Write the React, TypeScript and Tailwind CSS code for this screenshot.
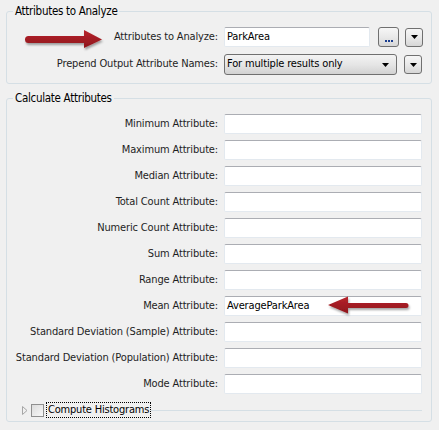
import React from "react";

// ventana de FME: Attributes to Analyze / Calculate Attributes

const font = { fontFamily: '"DejaVu Sans Condensed", "DejaVu Sans", sans-serif' };

const Caret = () => (
  <svg width="7" height="4" viewBox="0 0 7 4">
    <path d="M0 0 H7 L3.5 4 Z" fill="#000" />
  </svg>
);

const SmallBtn = () => (
  <button className="w-[18px] h-[19px] flex items-center justify-center border border-[#707070] rounded-[3px] bg-gradient-to-b from-[#f6f6f6] via-[#e9e9e9] to-[#d6d6d6]">
    <Caret />
  </button>
);

const TextBox = ({ value, w }: { value?: string; w: string }) => (
  <div
    className={`${w} h-[20px] bg-white border border-[#e3e9ef] border-t-[#abadb3] rounded-[2px] flex items-center pl-[2px] text-[11px] tracking-[-0.15px] text-black`}
  >
    {value}
  </div>
);

const Label = ({ text }: { text: string }) => (
  <span className="w-[211px] text-right text-[11px] tracking-[-0.15px] text-[#1e1e1e] whitespace-nowrap">
    {text}
  </span>
);

const calcRows = [
  { label: "Minimum Attribute:" },
  { label: "Maximum Attribute:" },
  { label: "Median Attribute:" },
  { label: "Total Count Attribute:" },
  { label: "Numeric Count Attribute:" },
  { label: "Sum Attribute:" },
  { label: "Range Attribute:" },
  { label: "Mean Attribute:", value: "AverageParkArea" },
  { label: "Standard Deviation (Sample) Attribute:" },
  { label: "Standard Deviation (Population) Attribute:" },
  { label: "Mode Attribute:" },
];

const App = () => {
  return (
    <div
      className="relative w-[439px] h-[430px] bg-[#f0f0f0] pl-[6px] pr-[7px] pt-[4px] overflow-hidden"
      style={font}
    >
      {/* grupo 1 */}
      <fieldset className="border border-[#d5dfe5] rounded-[3px] pt-[9px] pb-[8px]">
        <legend className="ml-[6px] px-[2px] text-[11.5px] tracking-[-0.3px] leading-[14px] text-black">
          Attributes to Analyze
        </legend>
        <div className="flex items-center gap-[6px]">
          <Label text="Attributes to Analyze:" />
          <TextBox value="ParkArea" w="w-[146px]" />
          <button className="ml-[2px] w-[21px] h-[20px] border border-[#707070] rounded-[3px] bg-gradient-to-b from-[#f6f6f6] via-[#e9e9e9] to-[#d6d6d6] flex items-end justify-center pb-[4px] gap-[1px]">
            <span className="w-[2px] h-[2px] bg-[#1a3d8f]" />
            <span className="w-[2px] h-[2px] bg-[#1a3d8f]" />
            <span className="w-[2px] h-[2px] bg-[#1a3d8f]" />
          </button>
          <SmallBtn />
        </div>
        <div className="flex items-center gap-[6px] mt-[7px]">
          <Label text="Prepend Output Attribute Names:" />
          <div className="w-[173px] h-[21px] border border-[#707070] rounded-[3px] bg-gradient-to-b from-[#f3f3f3] via-[#e6e6e6] to-[#d2d2d2] flex items-center justify-between pl-[2px] pr-[7px] text-[11px] tracking-[-0.15px] text-black">
            For multiple results only
            <Caret />
          </div>
          <div className="ml-[1px]">
            <SmallBtn />
          </div>
        </div>
      </fieldset>

      {/* grupo 2 */}
      <fieldset className="mt-[7px] border border-[#d5dfe5] rounded-[3px] pt-[9px] pb-[3px]">
        <legend className="ml-[6px] px-[2px] text-[11.5px] tracking-[-0.3px] leading-[14px] text-black">
          Calculate Attributes
        </legend>
        <div className="flex flex-col gap-[6px]">
          {calcRows.map((r) => (
            <div key={r.label} className="flex items-center gap-[6px]">
              <Label text={r.label} />
              <TextBox value={r.value} w="w-[198px]" />
            </div>
          ))}
        </div>
        <div className="flex items-center mt-[8px] h-[16px] pl-[15px] pr-[9px]">
          <svg width="6" height="9" viewBox="0 0 6 9" className="mr-[3px]">
            <path d="M0.5 0.5 L5 4.5 L0.5 8.5 Z" fill="none" stroke="#a6a6a6" />
          </svg>
          <span className="w-[13px] h-[13px] border border-[#8f8f8f] bg-gradient-to-br from-[#dcdcdc] to-[#f8f8f8]" />
          <span className="ml-[2px] px-[1px] border border-dotted border-black text-[11px] tracking-[-0.2px] leading-[14px] text-black">
            Compute Histograms
          </span>
          <span className="flex-1 h-px bg-[#d5dfe5]" />
        </div>
      </fieldset>

      {/* flechas rojas */}
      <svg
        className="absolute left-[20px] top-[26px]"
        width="90"
        height="28"
        viewBox="0 0 90 28"
      >
        <defs>
          <filter id="sh1" x="-10%" y="-30%" width="130%" height="180%">
            <feDropShadow dx="1" dy="2" stdDeviation="1.2" floodColor="#000" floodOpacity="0.35" />
          </filter>
          <linearGradient id="g1" x1="0" y1="0" x2="0" y2="1">
            <stop offset="0" stopColor="#b8242c" />
            <stop offset="1" stopColor="#8e161c" />
          </linearGradient>
        </defs>
        <path
          d="M8.5 10 H64 V4 L82 13.5 L64 22 V17 H8.5 A3.5 3.5 0 0 1 8.5 10 Z"
          fill="url(#g1)"
          filter="url(#sh1)"
        />
      </svg>
      <svg
        className="absolute left-[322px] top-[293px]"
        width="95"
        height="26"
        viewBox="0 0 95 26"
      >
        <defs>
          <filter id="sh2" x="-10%" y="-30%" width="130%" height="180%">
            <feDropShadow dx="1" dy="2" stdDeviation="1.2" floodColor="#000" floodOpacity="0.35" />
          </filter>
          <linearGradient id="g2" x1="0" y1="0" x2="0" y2="1">
            <stop offset="0" stopColor="#b8242c" />
            <stop offset="1" stopColor="#8e161c" />
          </linearGradient>
        </defs>
        <path
          d="M84 10 H26 V3.5 L6 12 L26 20.5 V15 H84 A2.5 2.5 0 0 0 84 10 Z"
          fill="url(#g2)"
          filter="url(#sh2)"
        />
      </svg>
    </div>
  );
};

export default App;
